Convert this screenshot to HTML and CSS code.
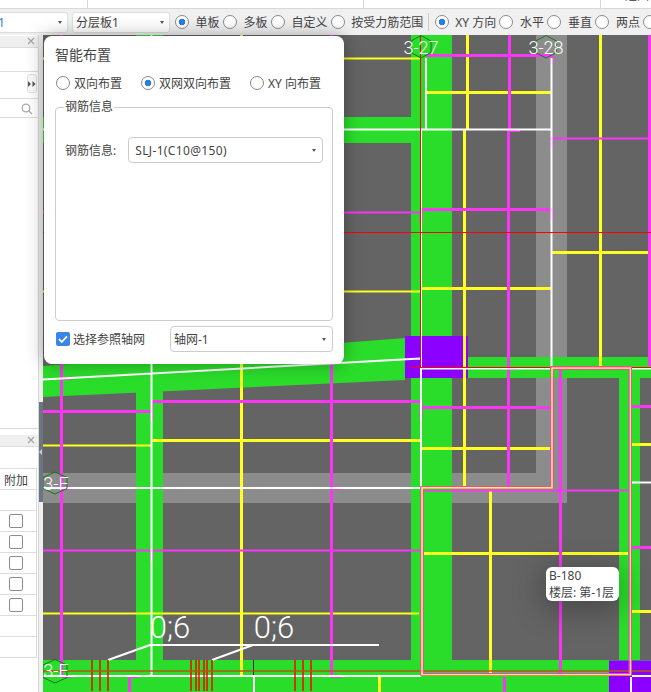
FILE: index.html
```html
<!DOCTYPE html>
<html lang="zh">
<head>
<meta charset="utf-8">
<title>智能布置</title>
<link rel="stylesheet" href="styles.css">
</head>
<body>
<div class="app">
  <div class="strip">
    <span class="strip-cell c1"></span>
    <span class="strip-cell c2"></span>
    <span class="strip-cell c3"></span>
    <span class="strip-text">退回</span>
  </div>
  <div class="toolbar">
    <div class="tool-select s1"><span class="tool-value blue">1</span><i class="caret"></i></div>
    <div class="tool-select s2"><span class="tool-value">分层板1</span><i class="caret"></i></div>
    <label class="opt"><span class="radio on"></span>单板</label>
    <label class="opt"><span class="radio"></span>多板</label>
    <label class="opt"><span class="radio"></span>自定义</label>
    <label class="opt"><span class="radio"></span>按受力筋范围</label>
    <span class="tool-sep"></span>
    <label class="opt"><span class="radio on"></span>XY 方向</label>
    <label class="opt"><span class="radio"></span>水平</label>
    <label class="opt"><span class="radio"></span>垂直</label>
    <label class="opt"><span class="radio"></span>两点</label>
    <label class="opt"><span class="radio"></span></label>
  </div>
  <div class="main">
    <aside class="side">
      <section class="panel top-panel">
        <div class="panel-head">
          <svg class="close" viewBox="0 0 8 8" width="8" height="8"><path d="M1 1l6 6M7 1l-6 6"/></svg>
        </div>
        <div class="panel-row r23"></div>
        <div class="panel-row r27">
          <span class="more"><svg viewBox="0 0 8 6" width="8" height="6"><path d="M0 0l3 3-3 3zM4.500 0l3 3-3 3z"/></svg></span>
        </div>
        <div class="panel-row search">
          <svg class="search-icon" viewBox="0 0 12 12" width="12" height="12"><circle cx="5" cy="5" r="3.8"/><path d="M8 8l3 3"/></svg>
        </div>
      </section>
      <section class="panel bottom-panel">
        <div class="panel-head">
          <svg class="close" viewBox="0 0 8 8" width="8" height="8"><path d="M1 1l6 6M7 1l-6 6"/></svg>
        </div>
        <div class="panel-row plain"></div>
        <div class="table">
          <div class="cell head">附加</div>
          <div class="cell"></div>
          <div class="cell"><span class="box"></span></div>
          <div class="cell"><span class="box"></span></div>
          <div class="cell"><span class="box"></span></div>
          <div class="cell"><span class="box"></span></div>
          <div class="cell"><span class="box"></span></div>
          <div class="cell"></div>
          <div class="cell"></div>
        </div>
      </section>
    </aside>
    <div class="splitter"><div class="grip"><i class="grip-arrow"></i></div></div>
    <div class="canvas">
      <svg class="cad" viewBox="43 35 608 657" width="608" height="657">
        <rect class="f-dark" x="43" y="35" width="608" height="657"/>
        <path class="f-grey" d="M536 35H567V503H43V473H536Z"/>
        <path class="f-green" d="M411 35H452V660H411ZM136 35H163V660H136ZM43 117H411V143H43ZM43 366L405 338V380L43 397ZM468 357H651V378H468ZM619 378H640V660H619ZM43 660H651V692H43Z"/>
        <path class="f-purple" d="M405 336H468V378H405ZM609 660.500H651V692H609Z"/>

        <g class="s-yellow w2">
          <path d="M43 58.500H420M43 291.500H420M43 445.500H151M43 613.500H419"/>
        </g>
        <g class="s-yellow w3">
          <path d="M467.500 35V130M427 92.500H551M464.500 130V486M600.500 35V367M552 252.500H651M422 288.500H551M422 448.500H551M152 440.500H421M241.500 35V675M490.500 490V675M423 553.500H628M632 444.500H651M632 611.500H651M379.500 677V692"/>
        </g>
        <g class="s-magenta w2">
          <path d="M43 212.500H421M43 550.500H420M423 490.500H628M552 138.500H651"/>
        </g>
        <g class="s-magenta w3">
          <path d="M426 55.500H552M551.500 55V65M509.500 35V130M508 130.500H520M508.500 130V486M551.500 138V148M421 212V222M422 209.500H552M551.500 209V219M649.500 35V366M61.500 35V677M61 676.500H72M61 378.500H72M61 488.500H72M331.500 35V676M331 676.500H342M331 488.500H342M43 411.500H152M151.500 401V421M152 401.500H421M422 407.500H551M421 401V418M151.500 550V561M560.500 370V673M632 406.500H651M632 547.500H651M129.500 676V692M129 676.500H139M504.500 677V692M508 368.500H518"/>
        </g>
        <g class="s-white w2">
          <path d="M426 58V130M43 129.500H552M551.500 58V368M421 130V487M151.500 35V675M43 379.500L420 358.500M421 368.500H551M632 368.500H651M43 488H421M632 482.500H651M150 645H379M108 660L150 645M212 660L253 645M43 676H421M632 676H651M254 676V692M631 677V692"/>
        </g>
        <g class="s-red w0">
          <path d="M420.500 35V368M43 232.500H651M410 367.500H651"/>
        </g>
        <g class="s-red w15">
          <path d="M92 660V691M100 660V691M108 660V691M191 660V691M196 660V691M199 660V691M204 660V691M207 660V691M212 660V691M295 660V691M303 660V691M311 660V691"/>
        </g>
        <path class="s-black w0" d="M253.500 660V675"/>
        <path class="s-brown w15" d="M43 671H651"/>

        <path class="s-magenta w0" d="M550.500 366.500H631.500V675.500H420.500V486.500H550.500Z"/>
        <path class="s-yellow w15" d="M552 368H630.300V674.500H422V487.700H552Z"/>
        <path class="s-magenta w0" d="M553.500 487.500V369.500H629V673.500H423.500V489"/>

        <path class="s-hex" d="M421 35.500L431 41V52.500L421 58L411 52.500V41Z"/>
        <path class="s-hex" d="M546 35.500L556.500 41V52.500L546 58L535.500 52.500V41Z"/>
        <path class="s-hex" d="M55 472L67 477.500V488.500L55 494L43 488.500V477.500Z"/>
        <path class="s-hex" d="M55 659.500L67 665V677.500L55 683L43 677.500V665Z"/>

        <text class="axis" x="421" y="54">3-27</text>
        <text class="axis" x="546" y="54">3-28</text>
        <text class="axis" x="56" y="490">3-F</text>
        <text class="axis" x="56" y="677">3-E</text>
        <text class="dim" x="170" y="638">0;6</text>
        <text class="dim" x="274" y="638">0;6</text>
      </svg>
      <div class="tooltip">B-180<br>楼层: 第-1层</div>
    </div>

    <div class="dialog">
      <h1 class="dialog-title">智能布置</h1>
      <div class="modes">
        <label class="mode m1"><span class="radio"></span>双向布置</label>
        <label class="mode m2"><span class="radio on"></span>双网双向布置</label>
        <label class="mode"><span class="radio"></span>XY 向布置</label>
      </div>
      <fieldset class="group">
        <legend class="group-title">钢筋信息</legend>
        <div class="field">
          <span class="field-label">钢筋信息:</span>
          <div class="select wide"><span class="wide-text">SLJ-1(C10@150)</span><i class="caret"></i></div>
        </div>
      </fieldset>
      <div class="dialog-foot">
        <label class="check-label">
          <span class="check"><svg viewBox="0 0 14 14" width="14" height="14"><path d="M3 7.200l2.800 2.800L11 4.400"/></svg></span>选择参照轴网
        </label>
        <div class="select grid-select"><span>轴网-1</span><i class="caret"></i></div>
      </div>
    </div>
  </div>
</div>
</body>
</html>
```

FILE: styles.css
```css
* { box-sizing: border-box; }
html, body { margin: 0; padding: 0; background: #fff; }
body {
  width: 651px;
  height: 692px;
  overflow: hidden;
  font-family: "Noto Sans", "Noto Sans CJK SC", "Liberation Sans", sans-serif;
  font-size: 12px;
  color: #444;
}
.app { width: 651px; height: 692px; display: flex; flex-direction: column; overflow: hidden; }

/* top strip */
.strip { height: 9px; flex: none; display: flex; background: #fff; border-bottom: 1px solid #d8d8d8; position: relative; overflow: hidden; }
.strip-cell { display: block; height: 8px; border-right: 1px solid #d8d8d8; }
.c1 { width: 88px; }
.c2 { width: 276px; }
.c3 { width: 237px; }
.strip-text { position: absolute; left: 625px; top: -13px; font-size: 12px; line-height: 17px; color: #333; }

/* toolbar */
.toolbar { height: 26px; flex: none; display: flex; align-items: center; background: #f0f0f0; white-space: nowrap; font-size: 12px; overflow: hidden; }
.tool-select { height: 21px; flex: none; display: flex; align-items: center; justify-content: space-between; background: #fff; border: 1px solid #dedede; border-radius: 3px; padding: 0 5px 0 3px; }
.s1 { width: 74px; margin-left: -6px; margin-right: 4px; }
.s2 { width: 98px; margin-right: 5px; }
.tool-value { line-height: 19px; }
.blue { color: #2a7de1; }
.caret { display: block; width: 0; height: 0; border-left: 2.5px solid transparent; border-right: 2.5px solid transparent; border-top: 3px solid #555; }
.opt { display: flex; align-items: center; gap: 6.6px; margin-right: 3.3px; flex: none; }
.tool-sep { width: 1px; height: 18px; background: #c8c8c8; margin: 0 6px 0 1px; flex: none; }
.radio { display: block; width: 14px; height: 14px; border-radius: 50%; border: 1px solid #8a8a8a; background: #fff; flex: none; }
.radio.on { background: radial-gradient(circle at center, #2a7de1 0, #2a7de1 3px, #fff 3.6px); }

/* main */
.main { flex: 1; min-height: 0; display: flex; position: relative; }

/* side panel */
.side { width: 39px; flex: none; display: flex; flex-direction: column; background: #fff; border-right: 1px solid #d8d8d8; overflow: hidden; }
.panel { display: flex; flex-direction: column; background: #fff; }
.top-panel { height: 394px; border-bottom: 1px solid #d8d8d8; }
.bottom-panel { margin-top: 5px; flex: 1; }
.panel-head { height: 11px; flex: none; background: #efefef; position: relative; margin-top: 1px; }
.close { position: absolute; left: 27px; top: 1px; display: block; }
.close path { fill: none; stroke: #a5a5a5; stroke-width: 1.2; }
.panel-row { flex: none; border-top: 1px solid #dcdcdc; position: relative; }
.r23 { height: 24px; }
.r27 { height: 27px; }
.plain { height: 22px; }
.more { position: absolute; left: 27px; top: 2px; width: 10px; height: 19px; display: flex; align-items: center; justify-content: center; border: 1px solid #e0e0e0; border-radius: 3px; background: #fafafa; }
.more svg { display: block; }
.more path { fill: #555; }
.search { height: 20px; border-bottom: 1px solid #dcdcdc; }
.search-icon { position: absolute; left: 21px; top: 4px; }
.search-icon circle, .search-icon path { fill: none; stroke: #aaa; stroke-width: 1.3; }
.table { width: 37px; border-right: 1px solid #dcdcdc; border-top: 1px solid #dcdcdc; }
.cell { height: 21px; border-bottom: 1px solid #dcdcdc; display: flex; align-items: center; justify-content: flex-end; padding-right: 13px; }
.cell.head { justify-content: flex-start; padding: 2px 0 0 4px; font-size: 12px; }
.box { display: block; width: 14px; height: 14px; border: 1px solid #8c8c8c; border-radius: 2px; background: #fff; }

/* splitter */
.splitter { width: 4px; flex: none; background: #f0f0f0; position: relative; }
.grip { position: absolute; left: 0; top: 367px; width: 4px; height: 100px; background: #6b7682; }
.grip-arrow { position: absolute; left: 0; top: 47px; width: 0; height: 0; border-top: 3px solid transparent; border-bottom: 3px solid transparent; border-right: 3px solid #c8c8c8; }

/* canvas */
.canvas { flex: 1; position: relative; overflow: hidden; background: #646464; }
.cad { display: block; }
.f-dark { fill: #646464; }
.f-grey { fill: #8c8c8c; }
.f-green { fill: #2bdd2b; }
.f-purple { fill: #8c00ff; }
.cad g, .cad path[class^="s-"] { fill: none; }
.s-yellow { stroke: #ffff22; }
.s-magenta { stroke: #fa35f5; }
.s-white { stroke: #fff; }
.s-red { stroke: #ff0000; }
.s-black { stroke: #222; }
.s-brown { stroke: #b05a10; }
.s-hex { stroke: #0a7d14; stroke-width: 1; }
.w0 { stroke-width: 1px; }
.w15 { stroke-width: 1.5px; }
.w2 { stroke-width: 2px; }
.w3 { stroke-width: 3px; }
.axis { font-family: "Roboto", sans-serif; font-weight: 300; font-size: 18px; fill: #fff; text-anchor: middle; }
.dim { font-family: "Roboto", sans-serif; font-weight: 300; font-size: 31px; fill: #fff; text-anchor: middle; }

/* tooltip */
.tooltip {
  position: absolute; left: 503px; top: 532px; width: 73px; height: 34px;
  padding: 0 3px; background: #fff; border-radius: 6px;
  font-size: 12px; line-height: 17px; white-space: nowrap; color: #444;
  box-shadow: 0 6px 30px 4px rgba(0, 0, 0, .28);
}

/* dialog */
.dialog {
  position: absolute; left: 44px; top: 1px; width: 300px; height: 328px;
  background: #fff; border-radius: 8px;
  box-shadow: 0 0 18px rgba(0, 0, 0, .35);
  padding: 10px 11px 0;
}
.dialog-title { margin: 0; font-size: 14px; font-weight: 400; line-height: 18px; color: #444; }
.modes { display: flex; margin: 11px 0 0 1px; height: 16px; align-items: center; font-size: 12px; }
.mode { display: flex; align-items: center; gap: 4px; }
.m1 { margin-right: 19px; }
.m2 { margin-right: 19px; }
.group { margin: 8px 0 0; padding: 0 9px; width: 278px; height: 222px; border: 1px solid #ccc; border-radius: 4px; }
.group-title { padding: 0 1px; margin-left: -1px; font-size: 12px; line-height: 16px; height: 16px; }
.field { display: flex; align-items: center; margin-top: 22px; gap: 12px; }
.field-label { white-space: nowrap; }
.select { height: 26px; display: flex; align-items: center; justify-content: space-between; border: 1px solid #ccc; border-radius: 4px; background: #fff; }
.wide { width: 195px; padding: 0 6px; }
.wide-text { letter-spacing: .35px; }
.dialog-foot { display: flex; align-items: center; justify-content: space-between; margin-top: 5px; width: 278px; padding-left: 1px; }
.check-label { display: flex; align-items: center; gap: 3px; }
.check { display: block; width: 14px; height: 14px; background: #3a86e8; border-radius: 2px; }
.check svg { display: block; }
.check path { fill: none; stroke: #fff; stroke-width: 1.8; }
.grid-select { width: 163px; padding: 0 6px 0 3px; }
```
